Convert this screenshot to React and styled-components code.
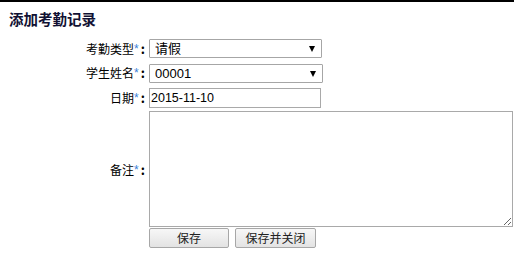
import styled, { createGlobalStyle } from "styled-components";

const GlobalStyle = createGlobalStyle`
  html, body {
    margin: 0;
    padding: 0;
    background: #fff;
  }
  body {
    font-family: "Liberation Sans", Arial, "Noto Sans CJK SC", sans-serif;
    font-size: 12px;
    color: #000;
  }
`;

const Page = styled.div`
  border-top: 2px solid #000;
  width: 514px;
  box-sizing: border-box;
`;

const Title = styled.h3`
  margin: 0;
  padding: 9px 0 0 9px;
  height: 27px;
  box-sizing: border-box;
  font-family: "Noto Sans CJK SC", sans-serif;
  font-size: 14.5px;
  line-height: 16px;
  font-weight: bold;
  color: #111133;
`;

const Form = styled.div`
  display: grid;
  grid-template-columns: 145px auto;
  column-gap: 4px;
  row-gap: 5px;
  padding-top: 10px;
  align-items: center;
`;

const Label = styled.label`
  text-align: right;
  font-family: "Noto Sans CJK SC", sans-serif;
  font-size: 12px;
  line-height: 16px;
  color: #000;
  white-space: nowrap;
`;

const Star = styled.span`
  color: #3b7fd9;
  font-family: "Liberation Sans", sans-serif;
  font-size: 12px;
  vertical-align: 1px;
`;

const Colon = styled.span`
  font-weight: bold;
  font-size: 13px;
  margin-left: 2px;
`;

const SelectWrap = styled.div`
  position: relative;
  width: ${({ $width }) => $width}px;
  height: 19px;
  margin-top: ${({ $mt }) => $mt || 0}px;
`;

const Select = styled.select`
  appearance: none;
  width: 100%;
  height: 100%;
  margin: 0;
  padding: 0 0 0 5px;
  box-sizing: border-box;
  border: 1px solid #a6a6a6;
  border-radius: 1px;
  background: #fff;
  font-family: "Liberation Sans", "Noto Sans CJK SC", sans-serif;
  font-size: 13px;
  color: #000;
  outline: none;
`;

const Arrow = styled.span`
  position: absolute;
  right: 7px;
  top: 7px;
  width: 0;
  height: 0;
  border-left: 3px solid transparent;
  border-right: 3px solid transparent;
  border-top: 6px solid #000;
  pointer-events: none;
`;

const Input = styled.input`
  width: 172px;
  height: 20px;
  margin: 0;
  padding: 0 1px;
  box-sizing: border-box;
  border: 1px solid #a9a9a9;
  font-family: "Liberation Sans", sans-serif;
  font-size: 12.5px;
  color: #000;
  outline: none;
`;

const TextArea = styled.textarea`
  display: block;
  width: 364px;
  height: 116px;
  margin: -2px 0 0;
  padding: 2px;
  box-sizing: border-box;
  border: 1px solid #a9a9a9;
  resize: both;
  outline: none;
`;

const Buttons = styled.div`
  display: flex;
  gap: 6px;
  margin-top: -4px;
`;

const Button = styled.button`
  width: ${({ $width }) => $width}px;
  height: 20px;
  margin: 0;
  padding: 0;
  border: 1px solid #a7a7a7;
  border-radius: 2px;
  background: linear-gradient(#f7f7f7, #e3e3e3);
  font-family: "Noto Sans CJK SC", sans-serif;
  font-size: 12px;
  line-height: 18px;
  color: #222;
`;

export default function App() {
  return (
    <Page>
      <GlobalStyle />
      <Title>添加考勤记录</Title>
      <Form>
        <Label>
          考勤类型<Star>*</Star><Colon>:</Colon>
        </Label>
        <SelectWrap $width={173}>
          <Select defaultValue="leave">
            <option value="leave">请假</option>
            <option value="absent">旷课</option>
          </Select>
          <Arrow />
        </SelectWrap>

        <Label>
          学生姓名<Star>*</Star><Colon>:</Colon>
        </Label>
        <SelectWrap $width={174} $mt={1}>
          <Select defaultValue="00001">
            <option value="00001">00001</option>
          </Select>
          <Arrow />
        </SelectWrap>

        <Label>
          日期<Star>*</Star><Colon>:</Colon>
        </Label>
        <Input defaultValue="2015-11-10" />

        <Label>
          备注<Star>*</Star><Colon>:</Colon>
        </Label>
        <TextArea />

        <span />
        <Buttons>
          <Button $width={80}>保存</Button>
          <Button $width={81}>保存并关闭</Button>
        </Buttons>
      </Form>
    </Page>
  );
}
